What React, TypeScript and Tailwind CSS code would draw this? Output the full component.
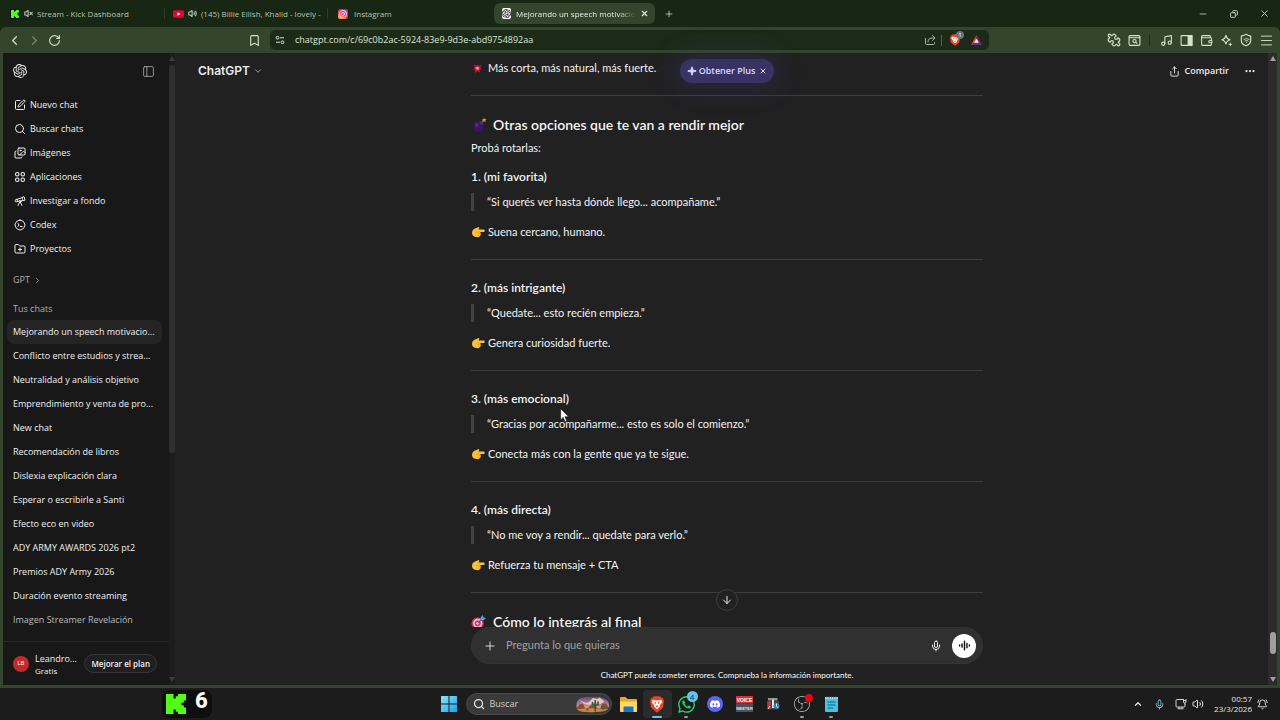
import type { ReactNode } from "react";
import {
  ArrowDown,
  BellRing,
  Bookmark,
  ChevronDown,
  ChevronLeft,
  ChevronRight,
  ChevronUp,
  Copy,
  Ellipsis,
  FolderPlus,
  Images,
  Menu,
  Mic,
  Minus,
  Music,
  PanelLeft,
  Plus,
  Puzzle,
  RotateCw,
  Search,
  Share,
  Shield,
  Sparkle,
  SquarePen,
  Telescope,
  Volume2,
  VolumeX,
  Wallet,
  X,
} from "lucide-react";
import { SiDiscord, SiObsstudio, SiOpenai, SiWhatsapp } from "react-icons/si";

/* ---------- Drawn icons ---------- */

function KickMark({ className }: { className: string }) {
  return (
    <svg viewBox="0 0 20 20" className={className} aria-hidden="true">
      <path d="M0 0h7.500v4.500h2.300v-2.300h2.200V0H20v6.500h-2.200v2.200h-2.300v2.600h2.300v2.200H20V20h-8v-2.200H9.800v-2.300H7.500V20H0z" fill="#53fc18" />
    </svg>
  );
}

function YoutubeMark() {
  return (
    <svg viewBox="0 0 20 14" className="h-[8px] w-[11px]" aria-hidden="true">
      <rect width="20" height="14" rx="3" fill="#e0062f" />
      <path d="M8 3.800v6.400L13.500 7z" fill="#fff" />
    </svg>
  );
}

function InstagramMark() {
  return (
    <svg viewBox="0 0 20 20" className="size-[10px]" aria-hidden="true">
      <defs>
        <linearGradient id="ig" x1="0.1" y1="1" x2="0.8" y2="0">
          <stop offset="0" stopColor="#ffc53d" />
          <stop offset="0.45" stopColor="#f4304c" />
          <stop offset="1" stopColor="#a32be0" />
        </linearGradient>
      </defs>
      <rect width="20" height="20" rx="5" fill="url(#ig)" />
      <rect x="3.500" y="3.500" width="13" height="13" rx="4" fill="none" stroke="#fff" strokeWidth="1.600" />
      <circle cx="10" cy="10" r="3" fill="none" stroke="#fff" strokeWidth="1.600" />
      <circle cx="13.800" cy="6.200" r="1" fill="#fff" />
    </svg>
  );
}

function TuneIcon() {
  return (
    <svg viewBox="0 0 20 20" className="size-[10px]" fill="none" stroke="currentColor" strokeWidth="2" aria-hidden="true">
      <circle cx="5" cy="5.500" r="2.800" />
      <path d="M10 5.500h8M2 14.500h8" />
      <circle cx="15" cy="14.500" r="2.800" />
    </svg>
  );
}

function SendIcon() {
  return (
    <svg viewBox="0 0 24 24" className="size-[12px]" fill="none" stroke="currentColor" strokeWidth="2" strokeLinecap="round" strokeLinejoin="round" aria-hidden="true">
      <path d="M3 9v10q0 2 2 2h14q2 0 2-2v-2" />
      <path d="M8 16q0-8 8-8h5M17 3l5 5-5 5" />
    </svg>
  );
}

function AppsIcon() {
  return (
    <svg viewBox="0 0 24 24" className="size-[12px]" fill="none" stroke="currentColor" strokeWidth="2.200" aria-hidden="true">
      <circle cx="6.500" cy="6.500" r="3.500" />
      <circle cx="17.500" cy="6.500" r="3.500" />
      <circle cx="6.500" cy="17.500" r="3.500" />
      <circle cx="17.500" cy="17.500" r="3.500" />
    </svg>
  );
}

function CodexIcon() {
  return (
    <svg viewBox="0 0 24 24" className="size-[12px]" fill="none" stroke="currentColor" strokeWidth="2" strokeLinecap="round" strokeLinejoin="round" aria-hidden="true">
      <path d="M12 2.200a5 5 0 0 1 4.200 1.500 5 5 0 0 1 4.100 4.100A5 5 0 0 1 21.800 12a5 5 0 0 1-1.500 4.200 5 5 0 0 1-4.100 4.100A5 5 0 0 1 12 21.800a5 5 0 0 1-4.200-1.500 5 5 0 0 1-4.100-4.100A5 5 0 0 1 2.200 12a5 5 0 0 1 1.500-4.200 5 5 0 0 1 4.100-4.100A5 5 0 0 1 12 2.200z" />
      <path d="m8 9 2 3-2 3M13 15h3.500" />
    </svg>
  );
}

function SearchWindowIcon() {
  return (
    <svg viewBox="0 0 24 24" className="size-[13px]" fill="none" stroke="currentColor" strokeWidth="2" strokeLinecap="round" aria-hidden="true">
      <rect x="2" y="3" width="20" height="18" rx="2" />
      <path d="M2 7h20" />
      <circle cx="12" cy="13" r="3" />
      <path d="m14.500 15.500 2 2" />
    </svg>
  );
}

function SidePanelIcon() {
  return (
    <svg viewBox="0 0 24 24" className="size-[13px]" fill="none" stroke="currentColor" strokeWidth="2" aria-hidden="true">
      <rect x="2" y="3" width="20" height="18" rx="1" />
      <path d="M15 3h7v18h-7z" fill="currentColor" />
    </svg>
  );
}

function LeoIcon() {
  return (
    <svg viewBox="0 0 24 24" className="size-[13px]" fill="none" stroke="currentColor" strokeWidth="2" strokeLinejoin="round" aria-hidden="true">
      <path d="M11 2.500c.9 4.700 2.800 6.900 7.500 8-4.700 1.100-6.600 3.300-7.500 8-.9-4.700-2.800-6.900-7.500-8 4.700-1.100 6.600-3.300 7.500-8z" />
      <path d="M19 15l1.200 2.800 2.800 1.200-2.800 1.200L19 23l-1.200-2.800L15 19l2.800-1.200z" fill="currentColor" stroke="none" />
    </svg>
  );
}

function VpnIcon() {
  return (
    <span className="relative grid place-items-center">
      <Shield className="size-[14px]" />
      <svg viewBox="0 0 12 12" className="absolute size-[7px]" fill="none" stroke="currentColor" strokeWidth="1.500" aria-hidden="true">
        <path d="M1 4.500q5-4 10 0M3 7q3-2.500 6 0M6 8v2" />
      </svg>
    </span>
  );
}

function BatMark() {
  return (
    <svg viewBox="0 0 24 22" className="h-[10px] w-[11px]" aria-hidden="true">
      <path d="M12 0 0 22l12-8z" fill="#ff4724" />
      <path d="M12 0l12 22-12-8z" fill="#9e1f63" />
      <path d="M0 22h24l-12-9z" fill="#662d91" />
      <path d="M12 8.500 7 17h10z" fill="#fff" />
    </svg>
  );
}

function BurstEmoji() {
  return (
    <svg viewBox="0 0 24 24" className="mx-px size-[11px]" aria-hidden="true">
      <path d="m3 2 6 4 3-3 2 3 8-2-4 6 3 3-4 2 1 6-6-3-5 4-1-6-4-2 4-3z" fill="#b4103c" />
      <path d="m8 8 3 .500 2-2 1 3 3 0-2 3 1 3-3-1-3 2-.500-3-3-2z" fill="#ff5a4d" />
      <circle cx="12" cy="11" r="2" fill="#ffd9b0" />
    </svg>
  );
}

function BombEmoji() {
  return (
    <svg viewBox="0 0 28 28" className="size-[16px]" aria-hidden="true">
      <circle cx="13" cy="17" r="9.500" fill="#3b1464" />
      <circle cx="10" cy="14" r="3.500" fill="#54258a" />
      <path d="M17 7l5 5-3 2.500-5-5z" fill="#4b3270" />
      <path d="M20 9q0-4 3-4" fill="none" stroke="#8a6a55" strokeWidth="1.800" />
      <path d="m23 1 1 2.500 3 .500-2 2 .500 3-2.500-1.500-2.500 1 .500-2.800-1.500-2 2.800-.200z" fill="#f28a3a" />
    </svg>
  );
}

function PointEmoji() {
  return (
    <svg viewBox="0 0 28 24" className="h-[12px] w-[14px]" aria-hidden="true">
      <path d="M3 9q3-5 8-5l4-2q2 0 1.500 2L15 7h10a2.500 2.500 0 0 1 0 5h-7q2 1 1 3 1.500 2-.500 3.500.500 2-1.500 2.500Q15 23 11 22q-6 0-8-4-2-4 0-9z" fill="#f9c23c" />
      <path d="M18 12h-6q-2 .300-2 1.500M19 15h-5M18.500 18.500H14" fill="none" stroke="#e09a1a" strokeWidth="1.200" strokeLinecap="round" />
    </svg>
  );
}

function TargetEmoji() {
  return (
    <svg viewBox="0 0 28 28" className="mr-px size-[15px]" aria-hidden="true">
      <circle cx="12.500" cy="15.500" r="11.500" fill="#ca2f5c" />
      <circle cx="12.500" cy="15.500" r="8.500" fill="#f6d7e3" />
      <circle cx="12.500" cy="15.500" r="5.800" fill="#d8335f" />
      <circle cx="12.500" cy="15.500" r="2.500" fill="#f6d7e3" />
      <path d="M12.500 15.500 21 7" stroke="#2b6f9e" strokeWidth="2" />
      <path d="M18 9V4.500L22 0l1.500 4.500L28 6l-4.500 4z" fill="#48a5e8" />
    </svg>
  );
}

function VoiceIcon() {
  return (
    <svg viewBox="0 0 24 24" className="size-[13px]" fill="none" stroke="#111" strokeWidth="2.600" strokeLinecap="round" aria-hidden="true">
      <path d="M3 11v2M7.500 9v6M12 4v16M16.500 8v8M21 11v2" />
    </svg>
  );
}

function WindowsMark() {
  return (
    <svg viewBox="0 0 32 32" className="size-[16px]" aria-hidden="true">
      <defs>
        <linearGradient id="win" x1="0" y1="0" x2="1" y2="1">
          <stop offset="0" stopColor="#8fe3fb" />
          <stop offset="1" stopColor="#1ba4e8" />
        </linearGradient>
      </defs>
      <path d="M0 1q0-1 1-1h14v15H0zM17 0h14q1 0 1 1v14H17zM0 17h15v15H1q-1 0-1-1zM17 17h15v14q0 1-1 1H17z" fill="url(#win)" />
    </svg>
  );
}

function DesertArt() {
  return (
    <svg viewBox="0 0 66 34" className="h-[17px] w-[33px]" aria-hidden="true">
      <defs>
        <linearGradient id="sky" x1="0" y1="0" x2="0" y2="1">
          <stop offset="0" stopColor="#59457c" />
          <stop offset="0.55" stopColor="#c08aa0" />
          <stop offset="0.75" stopColor="#e8b07a" />
        </linearGradient>
        <clipPath id="pill">
          <path d="M10 4Q22 0 34 2q14-2 24 4 8 4 8 12 0 10-10 12-22 4-44 1Q0 29 1 20q-1-12 9-16z" />
        </clipPath>
      </defs>
      <g clipPath="url(#pill)">
        <rect width="66" height="34" fill="url(#sky)" />
        <path d="M6 8l14 6 6-2 8-8 9 2 4-3 10 8-8 5-14-2-8 4-10-2z" fill="#e6c7bd" />
        <path d="M0 25l8-9h6l4 8h6l4-5h10l5 5h6l3-9h8l6 8v11H0z" fill="#8d4b34" />
        <path d="M0 27q30-5 66 0v7H0z" fill="#d1843c" />
        <path d="M38.500 30V9M33 13v5h5M44 12v6h-5" fill="none" stroke="#24603a" strokeWidth="3.200" strokeLinecap="round" />
        <path d="M54 28v-9m-3 2v4h6v-5" fill="none" stroke="#316b3d" strokeWidth="2" />
        <path d="m20 29 3-6 3 6z" fill="#3a7446" />
      </g>
    </svg>
  );
}

function FolderMark() {
  return (
    <svg viewBox="0 0 34 30" className="h-[15px] w-[17px]" aria-hidden="true">
      <path d="M0 2q0-2 2-2h9l4 4h17q2 0 2 2v22q0 2-2 2H2q-2 0-2-2z" fill="#e9a91f" />
      <path d="M0 9h34v19q0 2-2 2H2q-2 0-2-2z" fill="#ffd866" />
      <path d="M7 30V21q0-2 2-2h16q2 0 2 2v9z" fill="#1577c9" />
    </svg>
  );
}

function BraveMark({ className }: { className: string }) {
  return (
    <svg viewBox="0 0 24 28" className={className} aria-hidden="true">
      <path d="M12 0h5l2.500 2.500L22 3l2 5-1.500 10q-.500 2-2 3L12 28l-8.500-7q-1.500-1-2-3L0 8l2-5 2.500-.500L7 0z" fill="#f2431f" />
      <path d="M5 6l5 1 2-.500 2 .500 5-1 2 4-4.500 5.500.500 2-5 4.500-5-4.500.500-2L3 10z" fill="#fff" />
      <path d="M6.500 9.500l4 1-1 3zM17.500 9.500l-4 1 1 3zM12 15l2 2.500-2 1.500-2-1.500z" fill="#f2431f" />
    </svg>
  );
}

function VoicemeeterMark() {
  return (
    <svg viewBox="0 0 34 32" className="h-[16px] w-[17px]" aria-hidden="true">
      <rect width="34" height="15" fill="#d13433" />
      <rect y="15" width="34" height="17" fill="#46535f" />
      <text x="17" y="11" textAnchor="middle" fontSize="10" fontWeight="700" fill="#fff" fontFamily="Liberation Sans, sans-serif">VOICE</text>
      <text x="17" y="27" textAnchor="middle" fontSize="8" fontWeight="700" fill="#dfe5ea" fontFamily="Liberation Sans, sans-serif">MEETER</text>
    </svg>
  );
}

function MixerMark() {
  return (
    <svg viewBox="0 0 28 28" className="size-[14px]" aria-hidden="true">
      <rect x="4" y="2" width="19" height="5" fill="#8d979e" />
      <rect x="2" y="7" width="24" height="18" rx="2" fill="#39444d" />
      <path d="M3 9h7v6l-2 3 3 6H7l-4-5z" fill="#c23a3a" />
      <path d="M12 5h4v17h-4z" fill="#e2e6e9" />
      <circle cx="21" cy="18" r="6" fill="#2a82b8" />
      <path d="M21 13v6l3 2M4 24l4-6" stroke="#d5edf8" strokeWidth="2" fill="none" />
    </svg>
  );
}

function NotepadMark() {
  return (
    <svg viewBox="0 0 26 32" className="h-[16px] w-[13px]" aria-hidden="true">
      <rect y="2" width="26" height="30" rx="2" fill="#45c2e4" />
      <path d="M0 2h26v4H0z" fill="#a9e7f5" />
      <path d="M4 0v5M8.500 0v5M13 0v5M17.500 0v5M22 0v5" stroke="#2d6273" strokeWidth="1.600" />
      <path d="M5 12h16M5 18h16M5 24h11" stroke="#10657f" strokeWidth="2" />
    </svg>
  );
}

function NetworkIcon() {
  return (
    <svg viewBox="0 0 24 24" className="size-[12px]" fill="none" stroke="currentColor" strokeWidth="1.800" aria-hidden="true">
      <path d="M16 3H4Q2 3 2 5v11q0 2 2 2h14q2 0 2-2v-4M8 18v3M14 18v3M5 21.500h12" />
      <path d="M17 2v3h5V2M17 5v3q0 2 2.500 2T22 8V5M19.500 10v3" />
    </svg>
  );
}

/* ---------- Browser chrome ---------- */

function BrowserTab({ icon, title, divider, active }: { icon: ReactNode; title: string; divider?: boolean; active?: boolean }) {
  if (active) {
    return (
      <div className="ml-[3px] flex h-[21px] w-[161px] shrink items-center rounded-md bg-[#33452c] pr-[5px] pl-[8px] text-[#e8efe4]">
        <button className="flex min-w-0 flex-1 items-center gap-[5px]">
          {icon}
          <span className="flex-1 mask-r-from-85% text-left whitespace-nowrap">{title}</span>
        </button>
        <button aria-label="Cerrar pestaña" className="ml-[5px] grid size-[11px] place-items-center">
          <X className="size-[9px]" strokeWidth={3} />
        </button>
      </div>
    );
  }
  return (
    <button className="flex h-[21px] w-[163px] shrink items-center pl-[8px] text-[#b7c3b1]">
      <span className="flex min-w-0 flex-1 items-center gap-[4px]">
        {icon}
        <span className="flex-1 text-left whitespace-nowrap">{title}</span>
      </span>
      <span className={divider ? "ml-[4px] h-[11px] w-px bg-[#2c3d27]" : "ml-[4px] w-px"} />
    </button>
  );
}

function TabStrip() {
  return (
    <div className="flex h-[27px] shrink-0 items-center bg-[#182614] pl-[2px] text-[8px]">
      <BrowserTab
        divider
        title="Stream - Kick Dashboard"
        icon={
          <>
            <span className="grid size-[10px] place-items-center bg-black">
              <KickMark className="size-[8px]" />
            </span>
            <VolumeX className="size-[9px]" strokeWidth={3} />
          </>
        }
      />
      <BrowserTab
        divider
        title="(145) Billie Eilish, Khalid - lovely -"
        icon={
          <>
            <YoutubeMark />
            <Volume2 className="size-[9px]" strokeWidth={3} />
          </>
        }
      />
      <BrowserTab
        title="Instagram"
        icon={
          <span className="mr-[2px] ml-[2px]">
            <InstagramMark />
          </span>
        }
      />
      <BrowserTab
        active
        title="Mejorando un speech motivacio"
        icon={
          <span className="grid size-[11px] place-items-center rounded-[2px] bg-white text-black">
            <SiOpenai className="size-[9px]" />
          </span>
        }
      />
      <button aria-label="Nueva pestaña" className="ml-[8px] grid size-[12px] place-items-center text-[#c3cebd]">
        <Plus className="size-[10px]" />
      </button>
      <div className="ml-auto flex text-[#c3cebd]">
        <button aria-label="Minimizar" className="grid h-[20px] w-[31px] place-items-center">
          <Minus className="size-[10px]" />
        </button>
        <button aria-label="Restaurar" className="grid h-[20px] w-[31px] place-items-center">
          <Copy className="size-[8px] -scale-x-100" strokeWidth={3} />
        </button>
        <button aria-label="Cerrar" className="grid h-[20px] w-[31px] place-items-center">
          <X className="size-[11px]" strokeWidth={2} />
        </button>
      </div>
    </div>
  );
}

function ToolButton({ label, children }: { label: string; children: ReactNode }) {
  return (
    <button aria-label={label} className="grid size-[20px] place-items-center">
      {children}
    </button>
  );
}

function Toolbar() {
  return (
    <div className="flex h-[26px] shrink-0 items-center rounded-t-md bg-[#33452c] px-[4px] text-[#d5e2cf]">
      <div className="flex w-[266px] justify-between">
        <div className="flex">
          <ToolButton label="Atrás"><ChevronLeft className="size-[15px]" /></ToolButton>
          <ToolButton label="Adelante"><ChevronLeft className="size-[15px] rotate-180 opacity-40" /></ToolButton>
          <ToolButton label="Recargar"><RotateCw className="size-[13px]" /></ToolButton>
        </div>
        <div className="pr-[6px]">
          <ToolButton label="Guardar marcador"><Bookmark className="size-[13px]" /></ToolButton>
        </div>
      </div>
      <div className="flex h-[20px] flex-1 items-center rounded-[5px] bg-[#1c2b18] pr-[7px] pl-[5px]">
        <button aria-label="Información del sitio"><TuneIcon /></button>
        <input
          aria-label="Dirección"
          className="ml-[10px] min-w-0 flex-1 bg-transparent text-[9px] text-[#dbe5d6] outline-none"
          defaultValue="chatgpt.com/c/69c0b2ac-5924-83e9-9d3e-abd9754892aa"
        />
        <button aria-label="Compartir página" className="text-[#a9b9a2]"><SendIcon /></button>
        <span className="ml-[5px] h-[11px] w-px bg-[#50624a]" />
        <button aria-label="Brave Shields" className="relative mr-[11px] ml-[8px]">
          <BraveMark className="h-[12px] w-[10px]" />
          <span className="absolute -top-[3px] -right-[4px] grid size-[8px] place-items-center rounded-full bg-[#67727e] text-[6px] leading-none text-white">1</span>
        </button>
        <button aria-label="Brave Rewards"><BatMark /></button>
      </div>
      <div className="flex w-[287px] items-center justify-end">
        <ToolButton label="Extensiones"><Puzzle className="size-[14px] -scale-x-100" /></ToolButton>
        <ToolButton label="Buscar pestañas"><SearchWindowIcon /></ToolButton>
        <span className="mr-[6px] ml-[5px] h-[11px] w-px bg-[#1f2e1a]" />
        <ToolButton label="Multimedia"><Music className="size-[13px]" /></ToolButton>
        <ToolButton label="Panel lateral"><SidePanelIcon /></ToolButton>
        <ToolButton label="Cartera"><Wallet className="size-[13px]" /></ToolButton>
        <ToolButton label="Leo"><LeoIcon /></ToolButton>
        <ToolButton label="VPN"><VpnIcon /></ToolButton>
        <ToolButton label="Menú"><Menu className="size-[15px]" strokeWidth={1.5} /></ToolButton>
      </div>
    </div>
  );
}

/* ---------- Sidebar ---------- */

const navItems: { label: string; icon: ReactNode }[] = [
  { label: "Nuevo chat", icon: <SquarePen className="size-[12px]" /> },
  { label: "Buscar chats", icon: <Search className="size-[12px]" /> },
  { label: "Imágenes", icon: <Images className="size-[12px]" /> },
  { label: "Aplicaciones", icon: <AppsIcon /> },
  { label: "Investigar a fondo", icon: <Telescope className="size-[12px]" /> },
  { label: "Codex", icon: <CodexIcon /> },
  { label: "Proyectos", icon: <FolderPlus className="size-[12px]" /> },
];

const chats = [
  "Mejorando un speech motivacio...",
  "Conflicto entre estudios y strea...",
  "Neutralidad y análisis objetivo",
  "Emprendimiento y venta de pro...",
  "New chat",
  "Recomendación de libros",
  "Dislexia explicación clara",
  "Esperar o escribirle a Santi",
  "Efecto eco en video",
  "ADY ARMY AWARDS 2026 pt2",
  "Premios ADY Army 2026",
  "Duración evento streaming",
  "Imagen Streamer Revelación",
];

function Sidebar() {
  return (
    <aside className="flex w-[172px] shrink-0 bg-[#181818] text-[9px] text-[#f0f0f0]">
      <div className="flex min-w-0 flex-1 flex-col">
        <div className="flex h-[36px] shrink-0 items-center justify-between pr-[14px] pl-[10px]">
          <a href="#inicio" aria-label="ChatGPT"><SiOpenai className="size-[14px]" /></a>
          <button aria-label="Cerrar barra lateral" className="text-[#afafaf]"><PanelLeft className="size-[13px]" strokeWidth={1.5} /></button>
        </div>
        <nav className="min-h-0 flex-1 overflow-hidden pt-[4px] pr-[7px] pl-[4px]">
          {navItems.map((item) => (
            <a key={item.label} href="#nav" className="flex h-[24px] items-center gap-[4px] pl-[7px]">
              {item.icon}
              <span>{item.label}</span>
            </a>
          ))}
          <button className="mt-[7px] flex h-[24px] items-center gap-[3px] pl-[6px] text-[#afafaf]">
            GPT <ChevronRight className="size-[9px]" />
          </button>
          <h2 className="mt-[5px] h-[23px] pl-[6px] leading-[24px] text-[#afafaf]">Tus chats</h2>
          {chats.map((chat, i) => (
            <a
              key={chat}
              href="#chat"
              className={`flex h-[24px] items-center rounded-lg pl-[6px] whitespace-nowrap ${i === 0 ? "bg-[#242424]" : ""} ${i === chats.length - 1 ? "text-[#b8b8b8]" : ""}`}
            >
              {chat}
            </a>
          ))}
        </nav>
        <div className="flex h-[44px] shrink-0 items-center border-t border-[#272727] pr-[12px] pl-[10px]">
          <span className="grid size-[16px] shrink-0 place-items-center rounded-full bg-[#c22a2d] text-[6px] text-white">LB</span>
          <span className="ml-[6px] flex-1 whitespace-nowrap">
            <span className="block leading-[13px]">Leandro...</span>
            <span className="block text-[8px] leading-[11px]">Gratis</span>
          </span>
          <button className="h-[19px] rounded-full border border-[#363636] bg-[#202020] px-[6px] text-[8px] leading-[16px] font-semibold whitespace-nowrap">
            Mejorar el plan
          </button>
        </div>
      </div>
      <div className="flex w-[6px] flex-col items-center bg-[#1c1c1c] py-[3px]">
        <span className="h-0 w-0 border-x-[3px] border-b-[5px] border-x-transparent border-b-[#3c3c3c]" />
        <span className="mt-[4px] h-[62%] w-[6px] rounded-full bg-[#303030]" />
        <span className="mt-auto h-0 w-0 border-x-[3px] border-t-[5px] border-x-transparent border-t-[#3c3c3c]" />
      </div>
    </aside>
  );
}

/* ---------- Conversation ---------- */

const options = [
  { title: "1. (mi favorita)", quote: "“Si querés ver hasta dónde llego... acompañame.”", note: "Suena cercano, humano." },
  { title: "2. (más intrigante)", quote: "“Quedate... esto recién empieza.”", note: "Genera curiosidad fuerte." },
  { title: "3. (más emocional)", quote: "“Gracias por acompañarme... esto es solo el comienzo.”", note: "Conecta más con la gente que ya te sigue." },
  { title: "4. (más directa)", quote: "“No me voy a rendir... quedate para verlo.”", note: "Refuerza tu mensaje + CTA" },
];

function Thread() {
  return (
    <article className="mx-auto w-full max-w-[512px] pt-[6px] text-[11px] leading-[18px] text-[#f3f3f3]">
      <p className="flex items-center gap-[4px]"><BurstEmoji />Más corta, más natural, más fuerte.</p>
      <hr className="mt-[18px] border-[#3c3c3c]" />
      <h2 className="mt-[19px] flex items-center gap-[6px] text-[14px] leading-[20px] font-semibold"><BombEmoji />Otras opciones que te van a rendir mejor</h2>
      <p className="mt-[4px]">Probá rotarlas:</p>
      {options.map((option, i) => (
        <section key={option.title} className={i === 0 ? "mt-[11px]" : "mt-[19px]"}>
          <h3 className="text-[12px] font-semibold">{option.title}</h3>
          <blockquote className="mt-[7px] border-l-3 border-[#424242] pl-[13px]">{option.quote}</blockquote>
          <p className="mt-[12px] flex items-center gap-[3px]"><PointEmoji />{option.note}</p>
          <hr className="mt-[18px] border-[#3c3c3c]" />
        </section>
      ))}
      <h2 className="mt-[19px] flex items-center gap-[6px] text-[14px] leading-[20px] font-semibold"><TargetEmoji />Cómo lo integrás al final</h2>
    </article>
  );
}

function ChatMain() {
  return (
    <main className="relative flex min-w-0 flex-1 flex-col bg-[#212121] pl-[11px] font-['Lato','Open_Sans',sans-serif] text-[#ececec]">
      <div className="min-h-0 flex-1 overflow-hidden"><Thread /></div>

      <header className="absolute inset-x-0 top-0 grid h-[36px] grid-cols-[1fr_auto_1fr] items-center pr-[12px] pl-[23px] font-['Open_Sans',sans-serif]">
        <button className="flex items-center gap-[3px] justify-self-start font-['Inter',sans-serif] text-[12px] font-semibold">
          ChatGPT <ChevronDown className="size-[10px] text-[#afafaf]" />
        </button>
        <div className="flex h-[24px] items-center rounded-full bg-[#393265] px-[7px] text-[9px] font-semibold text-[#dcd8ff] shadow-[0_0_24px_8px_#4a42a030]">
          <button className="flex items-center gap-[2px]"><Sparkle className="size-[10px] fill-current" />Obtener Plus</button>
          <button aria-label="Descartar" className="ml-[4px]"><X className="size-[8px]" strokeWidth={3} /></button>
        </div>
        <div className="flex items-center gap-[15px] justify-self-end text-[9px] font-semibold">
          <button className="flex items-center gap-[5px]"><Share className="size-[11px]" />Compartir</button>
          <button aria-label="Más opciones"><Ellipsis className="size-[12px]" strokeWidth={2.5} /></button>
        </div>
      </header>

      <div className="relative mx-auto w-full max-w-[512px] shrink-0">
        <button aria-label="Ir al final" className="absolute -top-[38px] left-1/2 grid size-[22px] -translate-x-1/2 place-items-center rounded-full border border-[#3c3c3c] bg-[#212121]">
          <ArrowDown className="size-[12px]" />
        </button>
        <form className="flex h-[37px] items-center rounded-full border border-[#343434] bg-[#303030] pr-[6px] pl-[11px]">
          <button type="button" aria-label="Adjuntar"><Plus className="size-[14px]" strokeWidth={1.5} /></button>
          <input
            aria-label="Mensaje"
            placeholder="Pregunta lo que quieras"
            className="ml-[9px] min-w-0 flex-1 bg-transparent text-[11px] outline-none placeholder:text-[#a0a0a0]"
          />
          <button type="button" aria-label="Dictar"><Mic className="size-[12px]" /></button>
          <button type="button" aria-label="Usar voz" className="ml-[10px] grid size-[24px] place-items-center rounded-full bg-white"><VoiceIcon /></button>
        </form>
        <p className="h-[21px] text-center text-[8px] leading-[22px] text-white">ChatGPT puede cometer errores. Comprueba la información importante.</p>
      </div>
    </main>
  );
}

function PageScrollbar() {
  return (
    <div className="flex w-[9px] shrink-0 flex-col items-center bg-[#2b2b2b] py-[3px]">
      <span className="h-0 w-0 border-x-[3px] border-b-[5px] border-x-transparent border-b-[#9f9f9f]" />
      <span className="mt-auto h-[22px] w-[6px] rounded-full bg-[#9f9f9f]" />
      <span className="mt-[23px] h-0 w-0 border-x-[3px] border-t-[5px] border-x-transparent border-t-[#9f9f9f]" />
    </div>
  );
}

/* ---------- Taskbar ---------- */

function TaskButton({ label, active, running, children }: { label: string; active?: boolean; running?: boolean; children: ReactNode }) {
  return (
    <button
      aria-label={label}
      className={`relative grid h-[28px] w-[29px] place-items-center rounded ${active ? "bg-[#2b2b2b]" : ""}`}
    >
      {children}
      {active && <span className="absolute bottom-0 h-[2px] w-[10px] rounded-full bg-[#60c4f0]" />}
      {running && <span className="absolute bottom-0 h-[2px] w-[4px] rounded-full bg-[#9a9a9a]" />}
    </button>
  );
}

function Taskbar() {
  return (
    <footer className="grid flex-none grid-cols-[1fr_auto_1fr] items-center bg-[#1c1c1c] py-[2px] text-[#e6e6e6]">
      <div className="ml-[162px] flex h-[28px] w-[50px] items-center gap-[9px] rounded-lg bg-[#0e0e0e] pl-[4px]">
        <KickMark className="h-[22px] w-[20px]" />
        <span className="-mt-[6px] font-['Roboto',sans-serif] text-[22px] leading-none font-extrabold text-white">6</span>
      </div>

      <div className="flex items-center">
        <TaskButton label="Inicio"><WindowsMark /></TaskButton>
        <label className="mr-[2px] ml-[2px] flex h-[22px] w-[146px] items-center rounded-full border border-[#484848] bg-[#3a3a3a] pr-[2px] pl-[6px]">
          <Search className="size-[12px]" strokeWidth={2.5} />
          <input aria-label="Buscar" placeholder="Buscar" className="ml-[5px] w-0 flex-1 bg-transparent text-[9px] outline-none placeholder:text-[#cfcfcf]" />
          <DesertArt />
        </label>
        <TaskButton label="Explorador de archivos"><FolderMark /></TaskButton>
        <TaskButton label="Brave" active><BraveMark className="h-[17px] w-[14px]" /></TaskButton>
        <TaskButton label="WhatsApp" running>
          <SiWhatsapp className="size-[17px] text-[#25d366]" />
          <span className="absolute top-px right-[3px] grid size-[11px] place-items-center rounded-full bg-[#60c4f0] text-[8px] leading-none text-[#10303f]">4</span>
        </TaskButton>
        <TaskButton label="Discord">
          <span className="grid size-[16px] place-items-center rounded-full bg-[#5865f2] text-white"><SiDiscord className="size-[10px]" /></span>
        </TaskButton>
        <TaskButton label="Voicemeeter"><VoicemeeterMark /></TaskButton>
        <TaskButton label="Mezclador"><MixerMark /></TaskButton>
        <TaskButton label="OBS Studio" running>
          <SiObsstudio className="size-[16px] text-[#bdbdbd]" />
          <span className="absolute top-[4px] right-[4px] size-[8px] rounded-full bg-[#e8060c]" />
        </TaskButton>
        <TaskButton label="Bloc de notas" running><NotepadMark /></TaskButton>
      </div>

      <div className="flex items-center justify-self-end pr-[12px]">
        <button aria-label="Mostrar iconos ocultos"><ChevronUp className="size-[10px]" strokeWidth={3} /></button>
        <Mic className="ml-[11px] size-[11px] text-[#86c5d6]" />
        <span className="ml-[10px]"><NetworkIcon /></span>
        <Volume2 className="ml-[5px] size-[12px]" />
        <time className="ml-[10px] text-right text-[8px] leading-[10px]">
          <span className="block">00:57</span>
          <span className="block">23/3/2026</span>
        </time>
        <BellRing className="ml-[5px] size-[11px]" />
      </div>
    </footer>
  );
}

function Pointer() {
  return (
    <svg viewBox="0 0 16 24" className="pointer-events-none absolute top-[408px] left-[560px] h-[15px] w-[10px]" aria-hidden="true">
      <path d="M1 1v18l4-4 3 7 3-1-3-7h6z" fill="#fff" stroke="#111" strokeWidth="1" />
    </svg>
  );
}

export default function App() {
  return (
    <div className="relative flex h-screen flex-col overflow-hidden bg-[#182614] font-['Open_Sans','Noto_Sans',sans-serif]">
      <TabStrip />
      <Toolbar />
      <div className="flex min-h-0 flex-1 border-r-3 border-b-3 border-l-3 border-[#33452c]">
        <Sidebar />
        <ChatMain />
        <PageScrollbar />
      </div>
      <Taskbar />
      <Pointer />
    </div>
  );
}
